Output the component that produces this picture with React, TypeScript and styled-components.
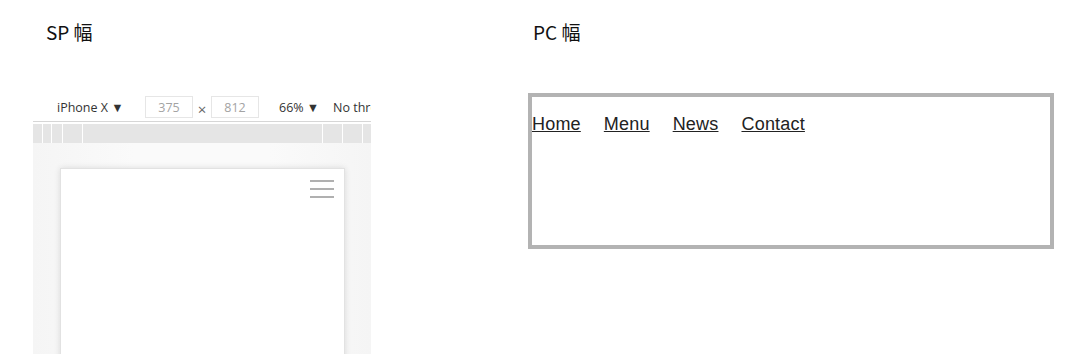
import React from 'react'
import styled, { createGlobalStyle } from 'styled-components'

const GlobalStyle = createGlobalStyle`
    html, body {
        margin: 0;
        padding: 0;
        background: #ffffff;
    }
    body {
        font-family: "Noto Sans CJK JP", "Noto Sans", sans-serif;
        overflow: hidden;
    }
`

const StyledPage = styled.main`
    display: grid;
    grid-template-columns: 338px 526px;
    column-gap: 157px;
    align-items: start;
    padding: 12px 0 0 33px;
    height: 354px;
    box-sizing: border-box;
    overflow: hidden;
`

const StyledColumn = styled.section`
    display: flex;
    flex-direction: column;
`

const StyledLabel = styled.h2<{ $indent: number }>`
    margin: 0 0 41px;
    padding-left: ${({ $indent }) => $indent}px;
    height: 40px;
    line-height: 40px;
    font-size: 19px;
    font-weight: 400;
    color: #111;
`

/* SP: devtools device emulation */

const StyledDevtools = styled.div`
    display: flex;
    flex-direction: column;
    height: 261px;
    overflow: hidden;
`

const StyledToolbar = styled.div`
    flex: none;
    display: flex;
    align-items: center;
    height: 28px;
    padding-left: 24px;
    border-bottom: 1px solid #d6d6d6;
    font-family: "Open Sans", "Noto Sans", sans-serif;
    font-size: 12.5px;
    color: #333;
    white-space: nowrap;
    overflow: hidden;
`

const StyledDevice = styled.span`
    flex: none;
    width: 88px;
`

const StyledSizeInput = styled.span`
    flex: none;
    display: inline-flex;
    align-items: center;
    justify-content: center;
    width: 46px;
    height: 20px;
    border: 1px solid #e6e6e6;
    color: #a3a3a3;
`

const StyledTimes = styled.span`
    flex: none;
    width: 18px;
    text-align: center;
    font-size: 15px;
    color: #666;
    padding-top: 3px;
`

const StyledZoom = styled.span`
    flex: none;
    margin-left: 20px;
    width: 54px;
`

const StyledRuler = styled.div`
    flex: none;
    display: flex;
    gap: 1px;
    margin-top: 2px;
    height: 19px;
    background: #fff;
`

const StyledRulerCell = styled.div<{ $w?: number }>`
    background: #e5e5e5;
    ${({ $w }) => ($w ? `width: ${$w}px; flex: none;` : 'flex: 1;')}
`

const StyledViewport = styled.div`
    flex: 1;
    min-height: 0;
    overflow: hidden;
    display: flex;
    justify-content: center;
    padding-top: 25px;
    background: linear-gradient(90deg, #f5f5f5 0%, #fafafa 30%, #fafafa 70%, #f5f5f5 100%);
`

const StyledScreen = styled.div`
    flex: none;
    width: 285px;
    height: 240px;
    background: #fff;
    border: 1px solid #e2e2e2;
    box-shadow: 0 0 6px rgba(0, 0, 0, 0.12);
    display: flex;
    justify-content: flex-end;
    align-items: flex-start;
    padding: 11px 10px 0 0;
    box-sizing: border-box;
`

const StyledBurger = styled.div`
    display: flex;
    flex-direction: column;
    gap: 6px;
    width: 24px;

    span {
        display: block;
        height: 2px;
        background: #b0b0b0;
    }
`

/* PC */

const StyledPcFrame = styled.div`
    height: 156px;
    border: 4px solid #b3b3b3;
    box-sizing: border-box;
`

const StyledNav = styled.nav`
    display: flex;
    gap: 23px;
    margin-top: 17px;
    font-family: "Liberation Sans", Arial, sans-serif;
    font-size: 18px;
    letter-spacing: 0.2px;

    a {
        color: #222;
        text-decoration: underline;
    }
`

const rulerCells = [9, 8, 10, 19, 0, 19, 19, 8]

const App = () => {
    return (
        <>
            <GlobalStyle />
            <StyledPage>
                <StyledColumn>
                    <StyledLabel $indent={13}>SP 幅</StyledLabel>
                    <StyledDevtools>
                        <StyledToolbar>
                            <StyledDevice>iPhone X ▼</StyledDevice>
                            <StyledSizeInput>375</StyledSizeInput>
                            <StyledTimes>×</StyledTimes>
                            <StyledSizeInput>812</StyledSizeInput>
                            <StyledZoom>66% ▼</StyledZoom>
                            <span>No throttling</span>
                        </StyledToolbar>
                        <StyledRuler>
                            {rulerCells.map((w, i) => (
                                <StyledRulerCell key={i} $w={w || undefined} />
                            ))}
                        </StyledRuler>
                        <StyledViewport>
                            <StyledScreen>
                                <StyledBurger>
                                    <span />
                                    <span />
                                    <span />
                                </StyledBurger>
                            </StyledScreen>
                        </StyledViewport>
                    </StyledDevtools>
                </StyledColumn>

                <StyledColumn>
                    <StyledLabel $indent={5}>PC 幅</StyledLabel>
                    <StyledPcFrame>
                        <StyledNav>
                            <a href='#'>Home</a>
                            <a href='#'>Menu</a>
                            <a href='#'>News</a>
                            <a href='#'>Contact</a>
                        </StyledNav>
                    </StyledPcFrame>
                </StyledColumn>
            </StyledPage>
        </>
    )
}

export default App
